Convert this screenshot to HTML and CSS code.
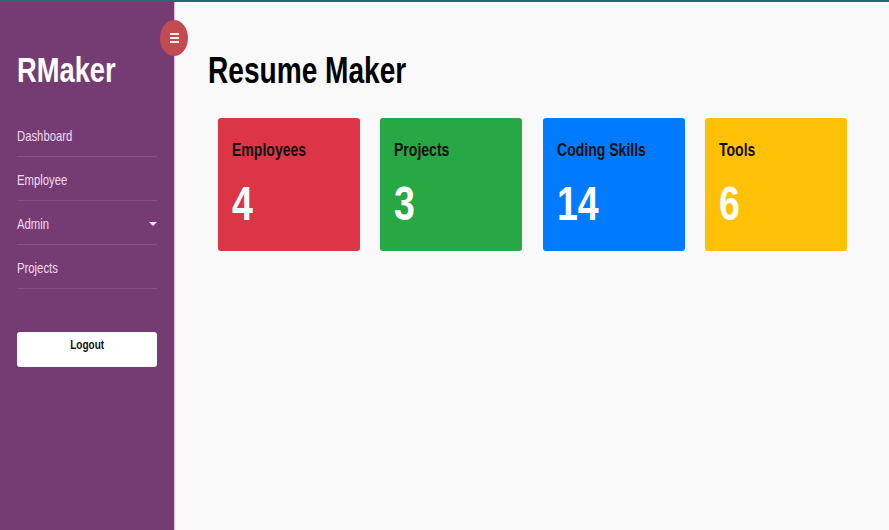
FILE: index.html
```html
<!DOCTYPE html>
<html lang="en">
<head>
<meta charset="utf-8">
<title>RMaker</title>
<link rel="stylesheet" href="styles.css">
</head>
<body>
<div class="app">
  <aside class="sidebar">
    <button class="toggle" aria-label="Toggle menu">
      <span class="bar"></span><span class="bar"></span><span class="bar"></span>
    </button>
    <div class="brand"><span class="narrow">RMaker</span></div>
    <nav class="nav">
      <a class="nav-item" href="#"><span class="narrow">Dashboard</span></a>
      <a class="nav-item" href="#"><span class="narrow">Employee</span></a>
      <a class="nav-item" href="#"><span class="narrow">Admin</span><span class="caret"></span></a>
      <a class="nav-item" href="#"><span class="narrow">Projects</span></a>
    </nav>
    <button class="logout"><span class="narrow-c">Logout</span></button>
  </aside>
  <main class="main">
    <h1 class="title"><span class="narrow">Resume Maker</span></h1>
    <div class="cards">
      <div class="card red">
        <div class="card-title"><span class="narrow">Employees</span></div>
        <div class="card-num"><span class="narrow">4</span></div>
      </div>
      <div class="card green">
        <div class="card-title"><span class="narrow">Projects</span></div>
        <div class="card-num"><span class="narrow">3</span></div>
      </div>
      <div class="card blue">
        <div class="card-title"><span class="narrow">Coding Skills</span></div>
        <div class="card-num"><span class="narrow">14</span></div>
      </div>
      <div class="card yellow">
        <div class="card-title"><span class="narrow">Tools</span></div>
        <div class="card-num"><span class="narrow">6</span></div>
      </div>
    </div>
  </main>
</div>
</body>
</html>
```

FILE: styles.css
```css
* { box-sizing: border-box; }
html, body {
  margin: 0;
  height: 100%;
  font-family: "Liberation Sans", Arial, sans-serif;
  background: #f9f9f9;
}
.app {
  display: flex;
  height: 100%;
  border-top: 2px solid #266a6e;
}
.narrow {
  display: inline-block;
  transform: scaleX(0.78);
  transform-origin: left center;
  white-space: nowrap;
}
.narrow-c {
  display: inline-block;
  transform: scaleX(0.8);
  transform-origin: center center;
  white-space: nowrap;
}
.sidebar {
  position: relative;
  width: 175px;
  flex: 0 0 175px;
  background: #753b73;
  border-right: 1px solid #d9b9d8;
  padding: 0 17px;
}
.toggle {
  position: absolute;
  top: 18px;
  right: -14px;
  width: 28px;
  height: 36px;
  border-radius: 50%;
  background: #c24a51;
  border: 0;
  padding: 0;
  display: flex;
  flex-direction: column;
  align-items: center;
  justify-content: center;
  gap: 2px;
  z-index: 2;
}
.toggle .bar {
  display: block;
  width: 9px;
  height: 2px;
  background: #fbeaea;
}
.brand {
  margin-top: 48px;
  font-size: 35px;
  line-height: 40px;
  font-weight: bold;
  color: #ffffff;
}
.nav {
  margin-top: 23px;
  display: flex;
  flex-direction: column;
}
.nav-item {
  height: 44px;
  padding-top: 2px;
  display: flex;
  align-items: center;
  justify-content: space-between;
  border-bottom: 1px solid #86508a;
  color: #f2dcf1;
  font-size: 14.5px;
  text-decoration: none;
}
.caret {
  width: 0;
  height: 0;
  border-left: 4px solid transparent;
  border-right: 4px solid transparent;
  border-top: 4px solid #f4e2f4;
  margin-right: 0;
}
.logout {
  margin-top: 43px;
  width: 140px;
  height: 35px;
  background: #ffffff;
  border: 0;
  border-radius: 3px;
  font-family: "Liberation Sans", Arial, sans-serif;
  font-weight: bold;
  font-size: 12.5px;
  color: #111111;
  padding: 0 0 10px 0;
}
.main {
  flex: 1;
  padding: 48px 0 0 33px;
}
.title {
  margin: 0;
  font-size: 36px;
  line-height: 42px;
  font-weight: bold;
  color: #000000;
}
.cards {
  margin-top: 26px;
  margin-left: 10px;
  display: flex;
  gap: 20.33px;
}
.card {
  width: 142px;
  height: 133px;
  border-radius: 3px;
  padding: 22px 14px 0 14px;
}
.card-title {
  font-size: 18px;
  line-height: 20px;
  font-weight: bold;
  color: #111111;
}
.card-num {
  margin-top: 20px;
  font-size: 48px;
  line-height: 48px;
  font-weight: bold;
  color: #ffffff;
}
.red { background: #dc3545; }
.green { background: #28a745; }
.blue { background: #007bff; }
.yellow { background: #ffc107; }
```
